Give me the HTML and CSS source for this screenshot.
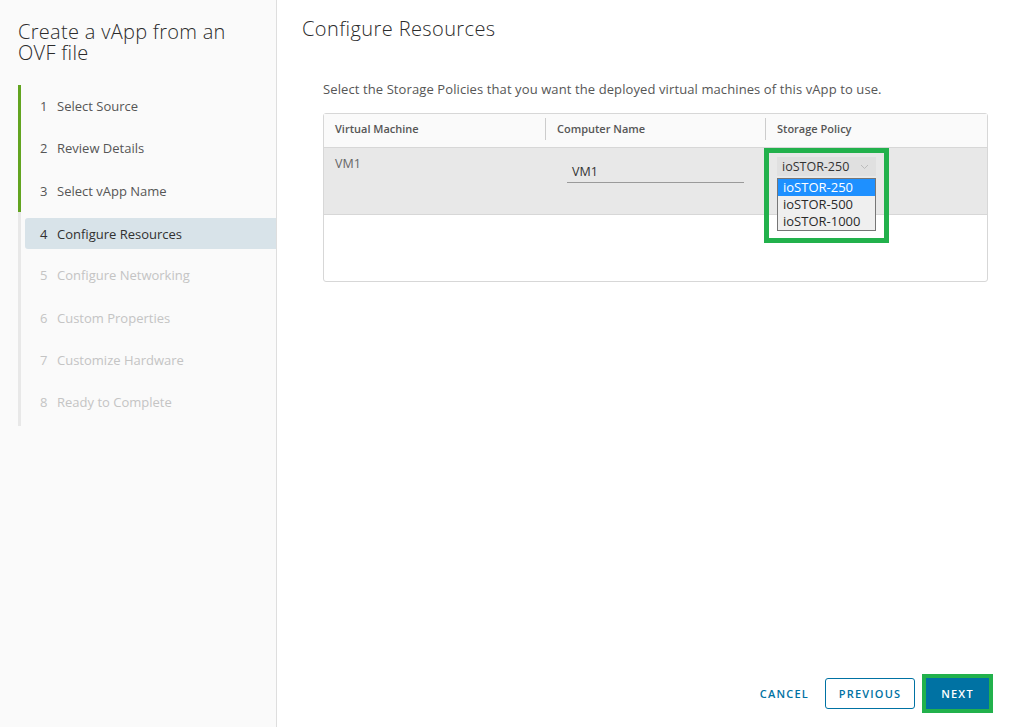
FILE: index.html
```html
<!DOCTYPE html>
<html lang="en">
<head>
    <meta charset="UTF-8">
    <title>Create a vApp from an OVF file</title>
    <link rel="stylesheet" href="styles.css">
</head>
<body>
    <div class="wizard">
        <!-- Steps sidebar -->
        <div class="sidebar">
            <h1 class="wizard-title">Create a vApp from an OVF file</h1>
            <ul class="steps">
                <li class="step done"><span class="num">1</span>Select Source</li>
                <li class="step done"><span class="num">2</span>Review Details</li>
                <li class="step done"><span class="num">3</span>Select vApp Name</li>
                <li class="step current"><div class="step-inner"><span class="num">4</span>Configure Resources</div></li>
                <li class="step todo"><span class="num">5</span>Configure Networking</li>
                <li class="step todo"><span class="num">6</span>Custom Properties</li>
                <li class="step todo"><span class="num">7</span>Customize Hardware</li>
                <li class="step todo"><span class="num">8</span>Ready to Complete</li>
            </ul>
        </div>

        <!-- Page content -->
        <div class="main">
            <h2 class="page-title">Configure Resources</h2>
            <div class="content">
                <p class="intro">Select the Storage Policies that you want the deployed virtual machines of this vApp to use.</p>

                <div class="grid">
                    <div class="grid-head">
                        <div class="col">Virtual Machine</div>
                        <div class="col sep">Computer Name</div>
                        <div class="col sep">Storage Policy</div>
                    </div>
                    <div class="grid-row">
                        <div class="cell vm">VM1</div>
                        <div class="cell">
                            <div class="name-input">VM1</div>
                        </div>
                        <div class="cell policy">
                            <div class="select">
                                <span>ioSTOR-250</span>
                                <svg class="chev" width="9" height="6" viewBox="0 0 9 6"><path d="M1 1l3.5 3.5L8 1" fill="none" stroke="#bbb" stroke-width="1"/></svg>
                            </div>
                            <ul class="options">
                                <li class="selected">ioSTOR-250</li>
                                <li>ioSTOR-500</li>
                                <li>ioSTOR-1000</li>
                            </ul>
                            <div class="mark mark-policy"></div>
                        </div>
                    </div>
                    <div class="grid-empty"></div>
                </div>
            </div>

            <div class="footer">
                <button class="btn btn-link">Cancel</button>
                <button class="btn btn-outline">Previous</button>
                <div class="next-wrap">
                    <button class="btn btn-primary">Next</button>
                </div>
            </div>
        </div>
    </div>
</body>
</html>
```

FILE: styles.css
```css
body {
    margin: 0;
    font-family: 'Open Sans', 'Liberation Sans', sans-serif;
    color: #313131;
    background: #fff;
}
.wizard {
    display: flex;
    height: 727px;
}
.sidebar {
    width: 258px;
    padding-left: 18px;
    background-color: #fafafa;
    border-right: 1px solid #dedede;
}
.wizard-title {
    margin: 21px 0 0 0;
    max-width: 225px;
    font-size: 20px;
    font-weight: 300;
    line-height: 21px;
    color: #2b2b2b;
    letter-spacing: 0.3px;
}
.steps {
    list-style: none;
    margin: 22px 0 0 0;
    padding: 0 0 3px 0;
    border-left: 3px solid #e8e8e8;
}
.step {
    height: 42.3px;
    display: flex;
    align-items: center;
    padding-left: 19px;
    font-size: 13px;
    color: #565656;
}
.step.done {
    border-left: 3px solid #62a420;
    margin-left: -3px;
}
.step.todo {
    color: #c4c4c4;
}
.step .num {
    display: inline-block;
    width: 17px;
}
.step.current {
    padding: 6px 0 5px 4px;
    box-sizing: border-box;
    align-items: stretch;
}
.step-inner {
    flex: 1;
    display: flex;
    align-items: center;
    padding-left: 15px;
    background-color: #d8e3e9;
    border-radius: 3px 0 0 3px;
    color: #313131;
}

.main {
    flex: 1;
    display: flex;
    flex-direction: column;
    padding: 0 43px 0 25px;
}
.page-title {
    margin: 17px 0 0 0;
    font-size: 20px;
    font-weight: 300;
    line-height: 24px;
    letter-spacing: 0.4px;
    color: #2b2b2b;
}
.content {
    padding-left: 21px;
    flex: 1;
}
.intro {
    margin: 39px 0 0 0;
    font-size: 13px;
    line-height: 18px;
    letter-spacing: 0.1px;
    color: #565656;
}
.grid {
    margin-top: 15px;
    border: 1px solid #d7d7d7;
    border-radius: 3px;
}
.grid-head,
.grid-row {
    display: grid;
    grid-template-columns: 221px 220px 1fr;
}
.grid-head {
    height: 33px;
    align-items: center;
    background-color: #fafafa;
    border-bottom: 1px solid #d7d7d7;
}
.col {
    padding: 0 0 4px 11px;
    font-size: 11px;
    font-weight: 600;
    color: #565656;
    line-height: 22px;
}
.col.sep {
    border-left: 1px solid #ccc;
    padding-bottom: 0;
    margin-bottom: 4px;
}
.grid-row {
    height: 66px;
    background-color: #e8e8e8;
    border-bottom: 1px solid #d7d7d7;
}
.cell {
    font-size: 12.5px;
}
.cell.vm {
    padding: 7px 0 0 11px;
    color: #666;
}
.name-input {
    margin: 15px 21px 0 22px;
    padding: 0 0 2px 5px;
    height: 17px;
    line-height: 17px;
    border-bottom: 1px solid #9a9a9a;
    color: #333;
}
.cell.policy {
    position: relative;
    padding: 9px 0 0 12px;
}
.select {
    width: 99px;
    height: 19px;
    box-sizing: border-box;
    padding-left: 5px;
    display: flex;
    align-items: center;
    justify-content: space-between;
    background-color: #e0e0e0;
    color: #333;
}
.chev {
    margin-right: 7px;
}
.options {
    list-style: none;
    margin: 2px 0 0 0;
    padding: 0;
    width: 99px;
    box-sizing: border-box;
    border: 1px solid #767676;
    background-color: #efefef;
    position: relative;
    z-index: 1;
}
.options li {
    height: 17px;
    line-height: 17px;
    padding-left: 5px;
    font-size: 13px;
    color: #2a2a2a;
}
.options li.selected {
    background-color: #1e90ff;
    color: #fff;
}
.grid-empty {
    height: 66px;
}

/* green annotation boxes */
.mark {
    position: absolute;
    border: 5px solid #22b14c;
    z-index: 2;
}
.mark-policy {
    left: -1px;
    top: 0;
    width: 115px;
    height: 85px;
}

.footer {
    display: flex;
    justify-content: flex-end;
    align-items: center;
    margin: 0 -5px 14px 0;
}
.btn {
    font-family: 'Open Sans', 'Liberation Sans', sans-serif;
    font-size: 11px;
    font-weight: 600;
    letter-spacing: 1.2px;
    text-transform: uppercase;
    height: 31px;
    border-radius: 3px;
    cursor: pointer;
}
.btn-link {
    background: none;
    border: none;
    color: #0072a3;
    margin-right: 10px;
}
.btn-outline {
    background: #fff;
    border: 1px solid #0072a3;
    color: #0072a3;
    width: 90px;
    margin-right: 7px;
}
.next-wrap {
    border: 4px solid #22b14c;
}
.btn-primary {
    display: block;
    background-color: #0072a3;
    border: none;
    border-radius: 0;
    color: #fff;
    width: 63px;
}
```
